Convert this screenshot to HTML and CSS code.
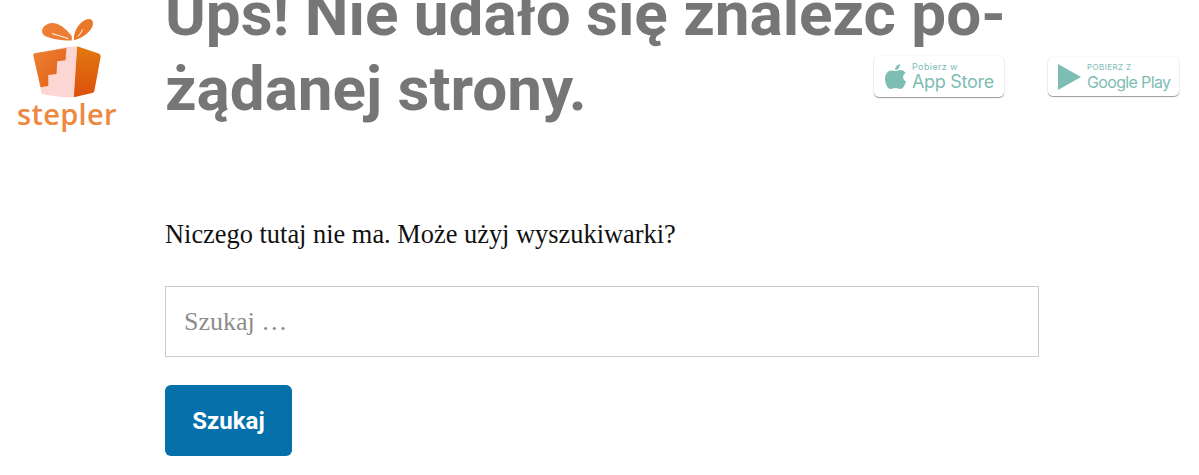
FILE: index.html
```html
<!DOCTYPE html>
<html lang="pl">
<head>
    <meta charset="utf-8">
    <title>Ups! Nie udało się znaleźć pożądanej strony.</title>
    <link rel="stylesheet" href="styles.css">
</head>
<body>
    <div class="page">
        <a class="logo" href="#">
            <svg class="logo-gift" width="73" height="83" viewBox="90 50 220 250">
                <defs>
                    <linearGradient id="boxRight" x1="0" y1="0" x2="0" y2="1">
                        <stop offset="0" stop-color="#e3790f"/>
                        <stop offset="1" stop-color="#dc500e"/>
                    </linearGradient>
                    <linearGradient id="boxLeft" x1="0" y1="0" x2="1" y2="1">
                        <stop offset="0" stop-color="#ee8136"/>
                        <stop offset="1" stop-color="#e05f15"/>
                    </linearGradient>
                </defs>
                <!-- kokarda -->
                <path d="M216 121C190 122 150 116 132 105C122 95 125 78 145 70C166 63 192 76 216 108Z" fill="#ec7d34"/>
                <path d="M156 100C175 105 190 110 205 115" fill="none" stroke="#fff" stroke-width="3"/>
                <path d="M222 120C221 90 240 62 265 56C283 54 284 75 271 90C259 105 241 116 222 120Z" fill="#e9782b"/>
                <path d="M234 109C240 103 245 96 248 88" fill="none" stroke="#fff" stroke-width="3"/>
                <!-- pudelko -->
                <path d="M100 165C100 162 102 160 105 159L200 140L232 138L222 292C190 292 155 288 125 281Z" fill="#fbd6d2"/>
                <path d="M100 166C100 162 102 160 105 159L200 143L197 180L172 183L170 222L145 225L145 258L122 262Z" fill="url(#boxLeft)"/>
                <path d="M232 138L297 160C301 162 303 165 303 170L284 272C283 276 281 278 277 279L222 292Z" fill="url(#boxRight)"/>
            </svg>
            <span class="logo-name">stepler</span>
        </a>
        <main class="content">
            <h1 class="title">Ups! Nie udało się znaleźć po-<br>żądanej strony.</h1>
            <p class="lead">Niczego tutaj nie ma. Może użyj wyszukiwarki?</p>
            <form class="search">
                <input class="search-field" type="search" placeholder="Szukaj …">
                <button class="search-btn" type="button">Szukaj</button>
            </form>
        </main>
    </div>
    <div class="stores">
        <a class="badge badge-apple" href="#">
            <svg class="badge-icon" width="21" height="26" viewBox="0 0 21 26">
                <path d="M15 0C15 3 13 6 10 6C10 3 12 1 15 0Z" fill="#7dbdb3"/>
                <path d="M10.500 7C12 7 13.500 6 15.500 6C17.500 6 19.500 7 20.500 9C17 11 17.500 16 21 17.500C20 20.500 18 25 15.500 25C13.500 25 13 24 10.500 24C8 24 7.500 25 5.500 25C3 25 0 20 0 15C0 10 3 6.500 6 6.500C8 6.500 9.500 7 10.500 7Z" fill="#7dbdb3"/>
            </svg>
            <span class="badge-text">
                <span class="badge-small">Pobierz w</span>
                <span class="badge-big">App Store</span>
            </span>
        </a>
        <a class="badge badge-google" href="#">
            <svg class="badge-icon" width="23" height="26" viewBox="0 0 23 26">
                <path d="M0 0L23 13L0 26Z" fill="#7dbdb3"/>
            </svg>
            <span class="badge-text">
                <span class="badge-small badge-caps">POBIERZ Z</span>
                <span class="badge-big badge-big-narrow">Google Play</span>
            </span>
        </a>
    </div>
</body>
</html>
```

FILE: styles.css
```css
html, body {
    margin: 0;
    padding: 0;
    height: 100%;
    overflow: hidden;
    background-color: #fff;
}
.page {
    display: flex;
}
/* logo */
.logo {
    flex: none;
    width: 165px;
    padding-top: 17px;
    text-decoration: none;
    display: flex;
    flex-direction: column;
    align-items: flex-start;
}
.logo-gift {
    display: block;
    margin-left: 30px;
}
.logo-name {
    margin: -4px 0 0 17px;
    font-family: "Open Sans", sans-serif;
    font-size: 29px;
    line-height: 36px;
    font-weight: 600;
    letter-spacing: 0.3px;
    color: #ee883f;
}
/* tresc */
.content {
    width: 874px;
}
.title {
    margin: -24px 0 0;
    font-family: Roboto, sans-serif;
    font-size: 62px;
    line-height: 75px;
    font-weight: 700;
    color: #767676;
}
.lead {
    margin: 89px 0 0;
    font-family: "Liberation Serif", serif;
    font-size: 26.4px;
    line-height: 38px;
    color: #111;
}
.search {
    margin-top: 33px;
}
.search-field {
    display: block;
    box-sizing: border-box;
    width: 874px;
    height: 71px;
    padding: 0 18px;
    border: 1px solid #ccc;
    border-radius: 0;
    outline: 0;
    font-family: "Liberation Serif", serif;
    font-size: 26px;
    color: #111;
}
.search-field::placeholder {
    color: #8c8c8c;
    opacity: 1;
}
.search-btn {
    display: block;
    width: 127px;
    height: 71px;
    margin-top: 28px;
    padding: 0;
    border: 0;
    border-radius: 6px;
    background-color: #0570aa;
    color: #fff;
    font-family: Roboto, sans-serif;
    font-size: 24px;
    font-weight: 700;
}
/* przyciski sklepow */
.stores {
    position: absolute;
    top: 56px;
    left: 874px;
    display: flex;
    gap: 44px;
    align-items: flex-start;
}
.badge {
    box-sizing: border-box;
    display: flex;
    align-items: center;
    height: 41px;
    background-color: #fff;
    border-radius: 5px;
    box-shadow: 0 1px 1px #999, 0 0 2px #e2e2e2;
    text-decoration: none;
    color: #7dbdb3;
    white-space: nowrap;
}
.badge-icon {
    flex: none;
}
.badge-apple {
    width: 130px;
    padding-left: 11px;
    gap: 6px;
}
.badge-google {
    width: 131px;
    height: 39px;
    margin-top: 1px;
    padding-left: 10px;
    gap: 6px;
}
.badge-text {
    display: flex;
    flex-direction: column;
    font-family: Inter, "Open Sans", sans-serif;
}
.badge-small {
    font-size: 9px;
    line-height: 10px;
    letter-spacing: 0.4px;
}
.badge-caps {
    font-size: 8px;
}
.badge-big {
    font-size: 18px;
    line-height: 20px;
    letter-spacing: -0.3px;
}
.badge-big-narrow {
    font-size: 16px;
    letter-spacing: -0.65px;
}
```
